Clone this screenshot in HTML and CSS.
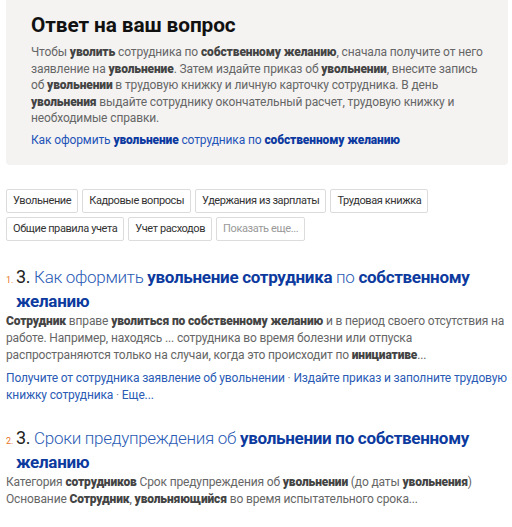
FILE: index.html
```html
<!DOCTYPE html>
<html lang="ru">
<head>
<meta charset="utf-8">
<link rel="stylesheet" href="styles.css">
</head>
<body>
<div class="page">
  <section class="answer">
    <h2 class="answer-title">Ответ на ваш вопрос</h2>
    <p class="answer-text">Чтобы <b>уволить</b> сотрудника по <b>собственному желанию</b>, сначала получите от него заявление на <b>увольнение</b>. Затем издайте приказ об <b>увольнении</b>, внесите запись об <b>увольнении</b> в трудовую книжку и личную карточку сотрудника. В день <b>увольнения</b> выдайте сотруднику окончательный расчет, трудовую книжку и необходимые справки.</p>
    <a class="answer-link" href="#">Как оформить <b>увольнение</b> сотрудника по <b>собственному желанию</b></a>
  </section>

  <div class="tags">
    <span class="tag">Увольнение</span>
    <span class="tag">Кадровые вопросы</span>
    <span class="tag">Удержания из зарплаты</span>
    <span class="tag">Трудовая книжка</span>
    <span class="tag">Общие правила учета</span>
    <span class="tag">Учет расходов</span>
    <span class="tag tag-more">Показать еще...</span>
  </div>

  <ol class="results">
    <li class="result">
      <a class="result-title" href="#"><span class="num">1.</span><span class="chapter">3.</span> Как оформить <b>увольнение сотрудника</b> по <b>собственному желанию</b></a>
      <p class="snippet"><b>Сотрудник</b> вправе <b>уволиться по собственному желанию</b> и в период своего отсутствия на работе. Например, находясь ... сотрудника во время болезни или отпуска распространяются только на случаи, когда это происходит по <b>инициативе</b>...</p>
      <p class="sublinks"><a href="#">Получите от сотрудника заявление об увольнении</a> · <a href="#">Издайте приказ и заполните трудовую книжку сотрудника</a> · <a href="#">Еще...</a></p>
    </li>
    <li class="result">
      <a class="result-title" href="#"><span class="num">2.</span><span class="chapter">3.</span> Сроки предупреждения об <b>увольнении по собственному желанию</b></a>
      <p class="snippet">Категория <b>сотрудников</b> Срок предупреждения об <b>увольнении</b> (до даты <b>увольнения</b>) Основание <b>Сотрудник</b>, <b>увольняющийся</b> во время испытательного срока...</p>
    </li>
  </ol>
</div>
</body>
</html>
```

FILE: styles.css
```css
* { box-sizing: border-box; }
html, body { margin: 0; padding: 0; background: #fff; }
body {
  font-family: "Roboto", "Liberation Sans", sans-serif;
  color: #555;
  font-size: 12px;
}
.page {
  padding: 0 4px 0 6px;
}
.answer {
  background: #f4f3f2;
  border-radius: 0 0 4px 4px;
  padding: 11px 24px 16px 25px;
}
.answer-title {
  margin: 0 0 5px;
  font-size: 20.8px;
  line-height: 28px;
  font-weight: 700;
  letter-spacing: -0.1px;
  color: #111;
}
.answer-text {
  margin: 0 0 5px;
  font-size: 12px;
  line-height: 16.5px;
  letter-spacing: -0.12px;
  color: #666;
}
.answer-text b { color: #444; font-weight: 900; }
.answer-link {
  display: block;
  font-size: 12px;
  line-height: 17px;
  letter-spacing: -0.12px;
  color: #1f54b8;
  text-decoration: none;
}
.answer-link b { color: #0d3aa0; font-weight: 900; }

.tags {
  display: flex;
  flex-wrap: wrap;
  gap: 4px;
  margin-top: 24px;
}
.tag {
  display: inline-flex;
  align-items: center;
  height: 24px;
  padding: 0 6px;
  border: 1px solid #dcdcdc;
  border-radius: 2px;
  font-size: 11px;
  letter-spacing: -0.4px;
  color: #333;
}
.tag-more { color: #999; }

.results {
  list-style: none;
  margin: 25px 0 0;
  padding: 0;
}
.result {
  margin-bottom: 23px;
}
.result-title {
  display: block;
  padding-left: 10px;
  text-indent: -10px;
  font-size: 17px;
  line-height: 21px;
  font-weight: 300;
  letter-spacing: -0.3px;
  color: #2a5bb5;
  text-decoration: none;
}
.result-title b { font-weight: 700; color: #0d3a9e; }
.num {
  display: inline-block;
  width: 10px;
  text-indent: 0;
  font-size: 9px;
  font-weight: 400;
  letter-spacing: 0;
  color: #e8732a;
}
.chapter { color: #222; font-size: 18px; font-weight: 400; }
.snippet {
  margin: 1px 0 0;
  font-size: 12px;
  line-height: 17px;
  letter-spacing: -0.14px;
  color: #666;
}
.snippet b { color: #444; font-weight: 900; }
.sublinks {
  margin: 6px 0 0;
  font-size: 12px;
  line-height: 17px;
  letter-spacing: -0.14px;
  color: #888;
}
.sublinks a { color: #2a5bb5; text-decoration: none; }
```
